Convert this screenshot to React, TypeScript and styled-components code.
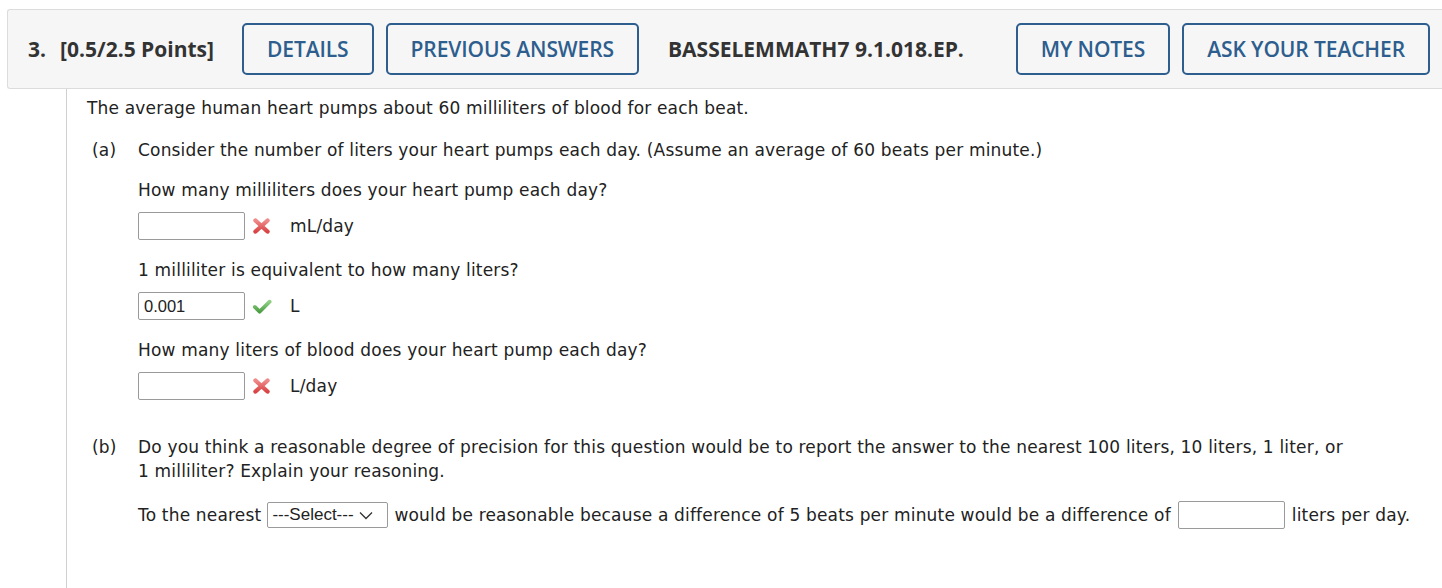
import styled, { createGlobalStyle } from 'styled-components';

// Estilos globais
const GlobalStyle = createGlobalStyle`
  html, body {
    margin: 0;
    padding: 0;
    background: #ffffff;
    overflow-x: hidden;
  }
  body {
    font-family: "DejaVu Sans", Verdana, sans-serif;
    color: #222;
  }
  * { box-sizing: border-box; }
`;

const Page = styled.div`
  padding-top: 9px;
  padding-left: 7px;
  min-height: 100vh;
  display: flex;
  flex-direction: column;
`;

const Header = styled.header`
  display: flex;
  align-items: center;
  height: 80px;
  margin-right: -8px;
  padding: 0 20px 0 20px;
  background: #f6f6f6;
  border: 1px solid #dcdcdc;
  border-right: none;
  border-radius: 3px 0 0 3px;
  font-family: "Open Sans", sans-serif;
`;

const HeaderText = styled.span<{ $before?: number; $after?: number }>`
  font-size: 21px;
  font-weight: 700;
  color: #333;
  letter-spacing: 0;
  margin-left: ${({ $before }) => $before ?? 0}px;
  margin-right: ${({ $after }) => $after ?? 0}px;
  white-space: nowrap;
`;

const ButtonGroup = styled.div<{ $push?: boolean }>`
  display: flex;
  gap: 12px;
  margin-left: ${({ $push }) => ($push ? 'auto' : '0')};
`;

const HeaderButton = styled.button`
  height: 52px;
  padding: 0 23px;
  background: transparent;
  border: 2px solid #2d5e8e;
  border-radius: 5px;
  color: #2d5e8e;
  font-family: "Open Sans", sans-serif;
  font-size: 21px;
  font-weight: 600;
  letter-spacing: -0.1px;
  white-space: nowrap;
  cursor: pointer;
`;

const Body = styled.main`
  flex-grow: 1;
  margin-left: 59px;
  border-left: 1px solid #cfcfcf;
  padding: 7px 20px 0 20px;
  font-size: 17px;
  letter-spacing: 0.18px;
  line-height: 24px;
`;

const Intro = styled.p`
  margin: 0;
`;

const Part = styled.section<{ $gap: number }>`
  display: grid;
  grid-template-columns: 51px 1fr;
  margin-top: ${({ $gap }) => $gap}px;
`;

const PartLabel = styled.span`
  padding-left: 5px;
`;

const PartContent = styled.div`
  display: flex;
  flex-direction: column;
`;

const Line = styled.p<{ $gap?: number }>`
  margin: ${({ $gap }) => $gap ?? 0}px 0 0 0;
`;

const AnswerRow = styled.div`
  display: flex;
  align-items: center;
  margin-top: 10px;
  height: 28px;
`;

const AnswerInput = styled.input`
  width: 107px;
  height: 28px;
  border: 1px solid #9a9a9a;
  border-radius: 2px;
  padding: 0 5px;
  font-family: "Liberation Sans", Arial, sans-serif;
  font-size: 16.5px;
  color: #222;
  background: #fff;
`;

const Mark = styled.span`
  display: inline-flex;
  width: 20px;
  margin-left: 7px;
  margin-right: 18px;
`;

const Unit = styled.span``;

const InlineRow = styled.div`
  display: flex;
  align-items: center;
  gap: 6px;
  margin-top: 18px;
  white-space: nowrap;
`;

const SelectBox = styled.div`
  display: inline-flex;
  align-items: center;
  justify-content: space-between;
  width: 121px;
  height: 26px;
  padding: 0 14px 0 4px;
  border: 1px solid #9a9a9a;
  border-radius: 2px;
  font-family: "Liberation Sans", Arial, sans-serif;
  font-size: 17px;
  letter-spacing: 0;
  color: #222;
`;

const InlineInput = styled(AnswerInput)`
  margin: 0 1px;
`;

function WrongMark() {
  return (
    <svg width="19" height="18" viewBox="0 0 19 18">
      <defs>
        <linearGradient id="xg" x1="0" y1="0" x2="0" y2="1">
          <stop offset="0" stopColor="#f08a8a" />
          <stop offset="1" stopColor="#d94545" />
        </linearGradient>
      </defs>
      <path d="M3.5 3.5 L15.5 14.5 M15.5 3.5 L3.5 14.5" stroke="url(#xg)" strokeWidth="4.4" strokeLinecap="round" fill="none" />
    </svg>
  );
}

function RightMark() {
  return (
    <svg width="21" height="18" viewBox="0 0 21 18">
      <defs>
        <linearGradient id="cg" x1="0" y1="0" x2="0" y2="1">
          <stop offset="0" stopColor="#8fd083" />
          <stop offset="1" stopColor="#4e9f45" />
        </linearGradient>
      </defs>
      <path d="M3 10 L8 15 L18.5 4.5" stroke="url(#cg)" strokeWidth="4" strokeLinecap="round" strokeLinejoin="round" fill="none" />
    </svg>
  );
}

function Chevron() {
  return (
    <svg width="14" height="9" viewBox="0 0 14 9">
      <path d="M1 1.5 L7 7.5 L13 1.5" stroke="#333" strokeWidth="1.3" fill="none" />
    </svg>
  );
}

const answers = [
  { question: 'How many milliliters does your heart pump each day?', value: '', ok: false, unit: 'mL/day' },
  { question: '1 milliliter is equivalent to how many liters?', value: '0.001', ok: true, unit: 'L' },
  { question: 'How many liters of blood does your heart pump each day?', value: '', ok: false, unit: 'L/day' },
];

export default function App() {
  return (
    <>
      <GlobalStyle />
      <Page>
        <Header>
          <HeaderText $after={14}>3.</HeaderText>
          <HeaderText $after={28}>[0.5/2.5 Points]</HeaderText>
          <ButtonGroup>
            <HeaderButton>DETAILS</HeaderButton>
            <HeaderButton>PREVIOUS ANSWERS</HeaderButton>
          </ButtonGroup>
          <HeaderText $before={29}>BASSELEMMATH7 9.1.018.EP.</HeaderText>
          <ButtonGroup $push>
            <HeaderButton>MY NOTES</HeaderButton>
            <HeaderButton>ASK YOUR TEACHER</HeaderButton>
          </ButtonGroup>
        </Header>
        <Body>
          <Intro>The average human heart pumps about 60 milliliters of blood for each beat.</Intro>
          <Part $gap={18}>
            <PartLabel>(a)</PartLabel>
            <PartContent>
              <Line>Consider the number of liters your heart pumps each day. (Assume an average of 60 beats per minute.)</Line>
              {answers.map((a, i) => (
                <div key={i}>
                  <Line $gap={i === 0 ? 16 : 18}>{a.question}</Line>
                  <AnswerRow>
                    <AnswerInput defaultValue={a.value} />
                    <Mark>{a.ok ? <RightMark /> : <WrongMark />}</Mark>
                    <Unit>{a.unit}</Unit>
                  </AnswerRow>
                </div>
              ))}
            </PartContent>
          </Part>
          <Part $gap={35}>
            <PartLabel>(b)</PartLabel>
            <PartContent>
              <Line>Do you think a reasonable degree of precision for this question would be to report the answer to the nearest 100 liters, 10 liters, 1 liter, or 1&nbsp;milliliter? Explain your reasoning.</Line>
              <InlineRow>
                <span>To the nearest</span>
                <SelectBox>
                  <span>---Select---</span>
                  <Chevron />
                </SelectBox>
                <span>would be reasonable because a difference of 5 beats per minute would be a difference of</span>
                <InlineInput />
                <span>liters per day.</span>
              </InlineRow>
            </PartContent>
          </Part>
        </Body>
      </Page>
    </>
  );
}
